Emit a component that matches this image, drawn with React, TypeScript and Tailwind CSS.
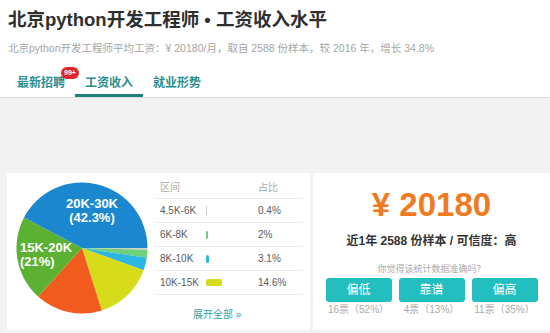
import React from 'react';

// 饼图分段：从3点钟方向顺时针
const slices = [
  { pct: 0.4, color: '#cfcfcf' },
  { pct: 2, color: '#6fd07a' },
  { pct: 3.1, color: '#2cb7e2' },
  { pct: 14.6, color: '#d6dc1a' },
  { pct: 16.6, color: '#f25b1e' },
  { pct: 21, color: '#5cb133' },
  { pct: 42.3, color: '#1a87cf' },
];

const rows = [
  { range: '4.5K-6K', pct: '0.4%', bar: 'w-[1px] h-[9px] bg-[#cccccc]' },
  { range: '6K-8K', pct: '2%', bar: 'w-[2px] h-[8px] bg-[#6fcf7a] rounded-[1px]' },
  { range: '8K-10K', pct: '3.1%', bar: 'w-[3px] h-[8px] bg-[#2cb7e2] rounded-[2px]' },
  { range: '10K-15K', pct: '14.6%', bar: 'w-[16px] h-[7px] bg-[#d6dc1a] rounded-[2px]' },
];

const votes = [
  { label: '偏低', text: '16票（52%）' },
  { label: '靠谱', text: '4票（13%）' },
  { label: '偏高', text: '11票（35%）' },
];

const Pie: React.FC = () => {
  const cx = 70;
  const cy = 70;
  const r = 65.5;
  let start = 0;
  const total = slices.reduce((s, x) => s + x.pct, 0);
  const paths = slices.map((s, i) => {
    const a0 = (start / total) * Math.PI * 2;
    start += s.pct;
    const a1 = (start / total) * Math.PI * 2;
    const x0 = cx + r * Math.cos(a0);
    const y0 = cy + r * Math.sin(a0);
    const x1 = cx + r * Math.cos(a1);
    const y1 = cy + r * Math.sin(a1);
    const large = a1 - a0 > Math.PI ? 1 : 0;
    return (
      <path
        key={i}
        d={`M${cx},${cy} L${x0},${y0} A${r},${r} 0 ${large} 1 ${x1},${y1} Z`}
        fill={s.color}
      />
    );
  });
  return (
    <svg width="140" height="140" viewBox="0 0 140 140">
      {paths}
      <g fill="#fff" fontFamily="'Liberation Sans', sans-serif" fontWeight="bold" fontSize="13">
        <text x="80" y="30" textAnchor="middle">20K-30K</text>
        <text x="80" y="44" textAnchor="middle">(42.3%)</text>
        <text x="8" y="74">15K-20K</text>
        <text x="8" y="88">(21%)</text>
      </g>
    </svg>
  );
};

const App: React.FC = () => {
  return (
    <div className="w-[550px] h-[333px] overflow-hidden bg-[#f2f2f2] font-['Liberation_Sans','Noto_Sans_CJK_SC',sans-serif]">
      {/* 顶部标题 */}
      <div className="bg-white border-b border-[#dedede] px-[8px] pt-[6px]">
        <h1 className="text-[18.5px] leading-[28px] font-bold text-[#2f2f2f] whitespace-nowrap">
          北京python开发工程师 • 工资收入水平
        </h1>
        <p className="mt-[7px] text-[10.5px] leading-[14px] text-[#a5a5a5] whitespace-nowrap">
          北京python开发工程师平均工资：¥ 20180/月，取自 2588 份样本，较 2016 年，增长 34.8%
        </p>
        <div className="mt-[13px] flex -ml-[1px]">
          <div className="relative px-[10px] pt-[7px] pb-[3px] border-b-[3px] border-transparent text-[12px] leading-[16px] font-bold text-[#2b8e8e]">
            最新招聘
            <span className="absolute left-[54px] top-[-1px] w-[18px] h-[12px] rounded-full bg-[#e0252b] text-white text-[7px] leading-[12px] text-center font-bold">
              99+
            </span>
          </div>
          <div className="px-[10px] pt-[7px] pb-[3px] border-b-[3px] border-[#1f7e7e] text-[12px] leading-[16px] font-bold text-[#2b8e8e]">
            工资收入
          </div>
          <div className="px-[10px] pt-[7px] pb-[3px] border-b-[3px] border-transparent text-[12px] leading-[16px] font-bold text-[#2b8e8e]">
            就业形势
          </div>
        </div>
      </div>

      {/* 内容卡片 */}
      <div className="pt-[75px] pl-[7px] flex gap-[3px]">
        <div className="w-[303px] h-[157px] bg-white flex">
          <div className="w-[148px] pl-[5px] pt-[5px]">
            <Pie />
          </div>
          <div className="w-[148px]">
            <div className="h-[26px] border-b border-[#ececec] flex pl-[5px] pt-[8px] text-[10px] leading-[14px] text-[#aaaaaa]">
              <span className="w-[98px]">区间</span>
              <span>占比</span>
            </div>
            {rows.map((r) => (
              <div key={r.range} className="h-[24px] border-b border-[#ececec] flex items-center pl-[5px] text-[10px] text-[#5a5a5a]">
                <span className="w-[45px]">{r.range}</span>
                <span className="w-[53px] flex items-center pl-[1px]">
                  <span className={r.bar} />
                </span>
                <span>{r.pct}</span>
              </div>
            ))}
            <div className="mt-[14px] pl-[38px] text-[10px] leading-[12px] text-[#3a9e9e]">展开全部 »</div>
          </div>
        </div>

        <div className="flex-1 h-[157px] bg-white flex flex-col items-center">
          <div className="pt-[12px] text-[33px] leading-[40px] font-bold text-[#f07a22]">¥ 20180</div>
          <div className="mt-[8px] text-[12px] leading-[16px] font-bold text-[#333333]">
            近1年 2588 份样本 / 可信度：高
          </div>
          <div className="mt-[14px] text-[9px] leading-[12px] text-[#aaaaaa]">你觉得该统计数据准确吗？</div>
          <div className="mt-[3px] flex gap-[7px]">
            {votes.map((v) => (
              <div key={v.label} className="flex flex-col items-center w-[66px]">
                <div className="w-[66px] h-[24px] rounded-[3px] bg-[#22bec0] text-white text-[12px] leading-[24px] text-center">
                  {v.label}
                </div>
                <div className="mt-[2px] text-[10px] leading-[12px] text-[#aaaaaa] whitespace-nowrap">{v.text}</div>
              </div>
            ))}
          </div>
        </div>
      </div>
    </div>
  );
};

export default App;
